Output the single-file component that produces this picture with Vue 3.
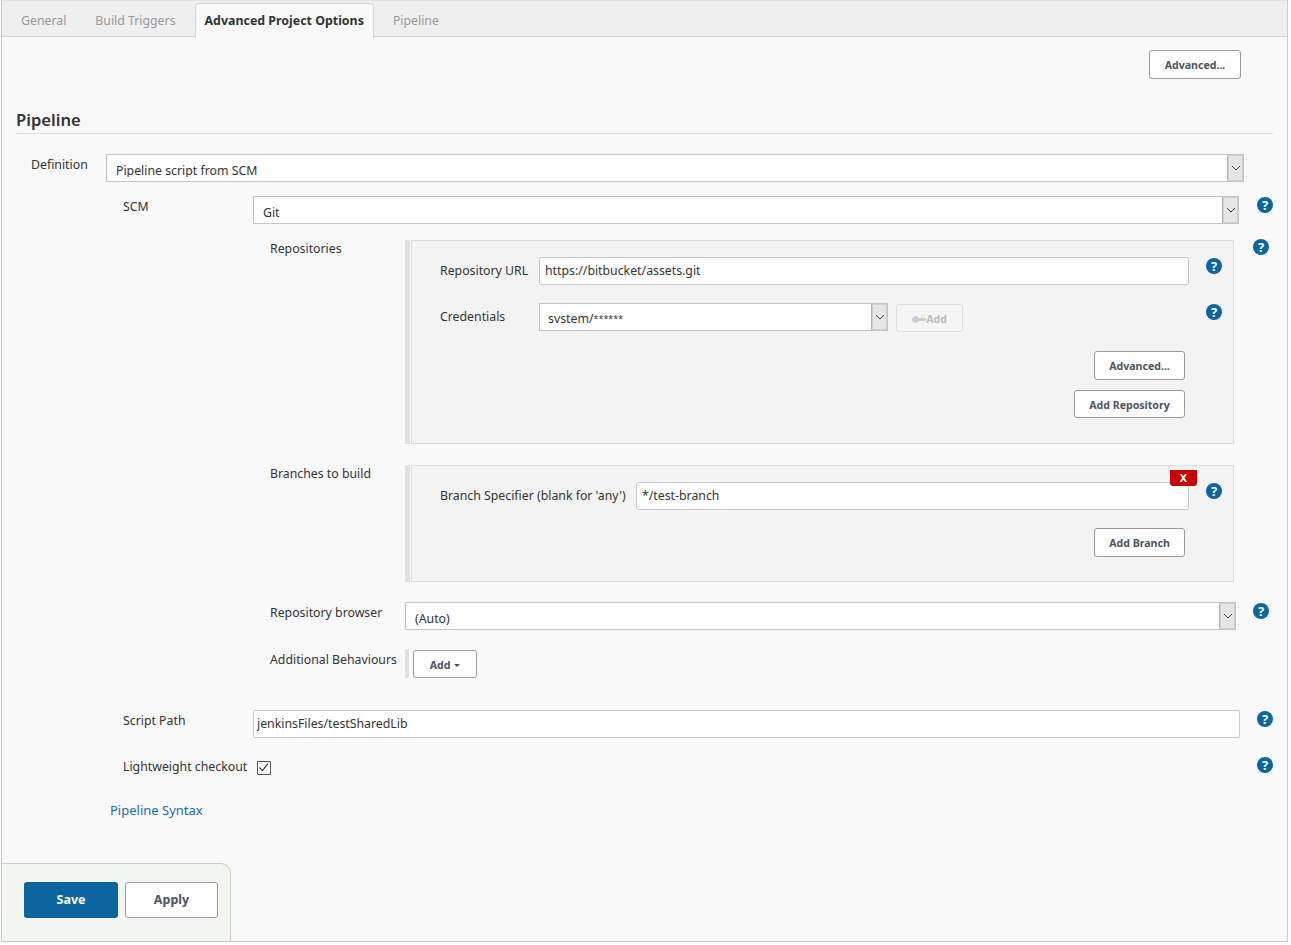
<script setup>
const tabs = [
  { label: 'General' },
  { label: 'Build Triggers' },
  { label: 'Advanced Project Options', active: true },
  { label: 'Pipeline' },
]
</script>

<template>
  <div class="page">
    <nav class="tabs">
      <a v-for="t in tabs" :key="t.label" class="tab" :class="{ active: t.active }">{{ t.label }}</a>
    </nav>

    <div class="top-action">
      <button class="btn w92">Advanced...</button>
    </div>

    <h2 class="section">Pipeline</h2>

    <div class="row def">
      <label class="lbl w75">Definition</label>
      <div class="select"><span class="val">Pipeline script from SCM</span><span class="arrow"><svg width="10" height="6" viewBox="0 0 10 6"><path d="M1 1l4 4 4-4" fill="none" stroke="#444" stroke-width="1"/></svg></span></div>
    </div>

    <div class="row scm">
      <label class="lbl w130">SCM</label>
      <div class="select"><span class="val">Git</span><span class="arrow"><svg width="10" height="6" viewBox="0 0 10 6"><path d="M1 1l4 4 4-4" fill="none" stroke="#444" stroke-width="1"/></svg></span></div>
      <span class="help ml18">?</span>
    </div>

    <div class="row git repos">
      <label class="lbl w135 lh16">Repositories</label>
      <div class="stripe"></div>
      <div class="panel h204">
        <div class="prow">
          <label class="lbl w99 pt3">Repository URL</label>
          <input class="input" value="https://bitbucket/assets.git" />
          <span class="help ml17">?</span>
        </div>
        <div class="prow mt18">
          <label class="lbl w99 pt3">Credentials</label>
          <div class="select w349"><span class="val cred">svstem/<small class="stars">******</small></span><span class="arrow"><svg width="10" height="6" viewBox="0 0 10 6"><path d="M1 1l4 4 4-4" fill="none" stroke="#444" stroke-width="1"/></svg></span></div>
          <button class="btn disabled">
            <svg class="key" width="14" height="9" viewBox="0 0 14 9"><circle cx="3.5" cy="4.5" r="3.3" fill="#c3cdd6"/><rect x="5" y="3.2" width="9" height="2.6" fill="#c3cdd6"/><rect x="9" y="0" width="4" height="3" fill="#f5ecb8"/></svg>Add
          </button>
          <span class="spacer"></span>
          <span class="help">?</span>
        </div>
        <div class="pactions">
          <button class="btn w91">Advanced...</button>
          <button class="btn w111 h28">Add Repository</button>
        </div>
      </div>
      <span class="help ml19 up">?</span>
    </div>

    <div class="row git branches">
      <label class="lbl w135 lh16">Branches to build</label>
      <div class="stripe"></div>
      <div class="panel h117">
        <button class="del">X</button>
        <div class="prow">
          <label class="lbl w196 pt3">Branch Specifier (blank for 'any')</label>
          <input class="input" value="*/test-branch" />
          <span class="help ml17">?</span>
        </div>
        <div class="pactions a2">
          <button class="btn w91">Add Branch</button>
        </div>
      </div>
      <span class="spacer35"></span>
    </div>

    <div class="row git browser">
      <label class="lbl w135">Repository browser</label>
      <div class="select"><span class="val">(Auto)</span><span class="arrow"><svg width="10" height="6" viewBox="0 0 10 6"><path d="M1 1l4 4 4-4" fill="none" stroke="#444" stroke-width="1"/></svg></span></div>
      <span class="help ml17">?</span>
    </div>

    <div class="row git behaviours">
      <label class="lbl w135">Additional Behaviours</label>
      <div class="stripe small"></div>
      <button class="btn addb">Add <i class="caret"></i></button>
    </div>

    <div class="row script">
      <label class="lbl w130">Script Path</label>
      <input class="input tight" value="jenkinsFiles/testSharedLib" />
      <span class="help ml17">?</span>
    </div>

    <div class="row light">
      <label class="lbl w134">Lightweight checkout</label>
      <span class="check"><svg width="13" height="13" viewBox="0 0 13 13"><path d="M2.5 6.5l3 3.2 5.5-7" fill="none" stroke="#333" stroke-width="1.1"/></svg></span>
      <span class="spacer"></span>
      <span class="help lift">?</span>
    </div>

    <a class="syntax">Pipeline Syntax</a>

    <div class="savebar">
      <button class="save">Save</button>
      <button class="apply">Apply</button>
    </div>
  </div>
</template>

<style>
html, body { margin: 0; background: #fff; }
</style>

<style scoped>
.page {
  position: relative;
  box-sizing: border-box;
  width: 1287px;
  height: 942px;
  margin-left: 1px;
  border: 1px solid #c9cdc9;
  border-top: 0;
  background: #f9f9f9;
  font-family: "Noto Sans", "Open Sans", sans-serif;
  font-size: 12.3px;
  color: #333;
  overflow: hidden;
}
.tabs {
  display: flex;
  box-sizing: border-box;
  height: 37px;
  padding-left: 9px;
  background: #efefef;
  border-top: 1px solid #e2e2e2;
  border-bottom: 1px solid #d4d4d4;
}
.tab {
  box-sizing: border-box;
  height: 34px;
  margin-top: 2px;
  padding: 6px 10px 0;
  margin-right: 9px;
  line-height: 23px;
  font-size: 12.3px;
  color: #999;
  white-space: nowrap;
}
.tab.active {
  height: 35px;
  margin-right: 9px;
  padding: 5px 9px 0;
  background: #f9f9f9;
  border: 1px solid #d4d4d4;
  border-bottom: 0;
  border-radius: 4px 4px 0 0;
  color: #333;
  font-size: 12.4px;
  font-weight: 700;
}
.top-action {
  display: flex;
  justify-content: flex-end;
  padding: 13px 46px 0 0;
}
.btn {
  box-sizing: border-box;
  height: 29px;
  padding: 2px 0 0;
  background: #fff;
  border: 1px solid #9a9a9a;
  border-radius: 3px;
  font: 700 10.6px/1 "Noto Sans", "Open Sans", sans-serif;
  color: #4d545d;
  white-space: nowrap;
}
.w92 { width: 92px; }
.w91 { width: 91px; }
.w111 { width: 111px; }
.h28 { height: 28px; }
.section {
  margin: 29px 14px 0;
  height: 26px;
  box-sizing: border-box;
  border-bottom: 1px solid #ddd;
  font-size: 16.6px;
  line-height: 24px;
  font-weight: 600;
  color: #333;
}
.row { display: flex; align-items: flex-start; }
.def { margin-top: 20px; padding: 0 43px 0 29px; }
.scm { margin-top: 14px; padding: 0 14px 0 121px; }
.git { padding: 0 18px 0 268px; }
.repos { margin-top: 16px; }
.branches { margin-top: 21px; }
.browser { margin-top: 20px; }
.behaviours { margin-top: 19px; }
.script { margin-top: 32px; padding: 0 14px 0 121px; }
.light { margin-top: 23px; padding: 0 14px 0 121px; }
.lbl { flex: none; padding-top: 1px; line-height: 20px; white-space: nowrap; color: #333; }
.lh16 { line-height: 16px; }
.pt3 { padding-top: 4px; }
.w75 { width: 75px; }
.w130 { width: 130px; }
.w134 { width: 134px; margin-top: -5px; }
.w135 { width: 135px; }
.w99 { width: 99px; }
.w196 { width: 196px; }
.select {
  position: relative;
  flex: 1;
  box-sizing: border-box;
  height: 28px;
  background: #fff;
  border: 1px solid #c4c4c4;
  overflow: hidden;
}
.w349 { flex: none; width: 349px; }
.val {
  position: absolute;
  left: 9px;
  top: 6px;
  height: 16px;
  line-height: 20px;
  overflow: hidden;
  white-space: nowrap;
}
.cred { left: 8px; top: 5px; }
.stars { font-size: 9px; vertical-align: 1px; }
.arrow {
  position: absolute;
  right: 0;
  top: 0;
  bottom: 0;
  width: 16px;
  display: flex;
  align-items: center;
  justify-content: center;
  box-sizing: border-box;
  background: #e6e6e6;
  border-left: 1px solid #b4b4b4;
  box-shadow: inset 0 0 0 1px #cfcfcf;
}
.help {
  flex: none;
  width: 16px;
  height: 16px;
  margin-top: 1px;
  border-radius: 50%;
  background: #0b659f;
  color: #fff;
  font: 700 13px/16px "Noto Sans", "Open Sans", sans-serif;
  text-align: center;
}
.ml17 { margin-left: 17px; }
.ml18 { margin-left: 18px; }
.ml19 { margin-left: 19px; }
.up { margin-top: -1px; }
.lift { margin-top: -4px; }
.stripe { flex: none; width: 5px; align-self: stretch; margin-right: 1px; background: #e0e0e0; }
.stripe.small { width: 4px; height: 29px; margin-right: 4px; align-self: flex-start; }
.panel {
  position: relative;
  flex: 1;
  box-sizing: border-box;
  padding: 16px 11px 0 28px;
  background: #f3f3f3;
  border: 1px solid #dcdcdc;
}
.h204 { height: 204px; }
.h117 { height: 117px; }
.prow { display: flex; align-items: flex-start; }
.mt18 { margin-top: 18px; }
.input {
  flex: 1;
  min-width: 0;
  box-sizing: border-box;
  height: 28px;
  padding: 0 5px 1px;
  background: #fff;
  border: 1px solid #c9c9c9;
  border-radius: 2px;
  font: 12.3px "Noto Sans", "Open Sans", sans-serif;
  color: #333;
  outline: 0;
}
.tight { padding: 0 3px 1px; }
.btn.disabled {
  display: flex;
  align-items: center;
  justify-content: center;
  width: 67px;
  height: 28px;
  margin: 1px 0 0 8px;
  background: #f5f5f5;
  border-color: #dedede;
  color: #bdbdbd;
}
.key { margin-right: 0; }
.spacer { flex: 1; }
.spacer35 { flex: none; width: 35px; }
.pactions {
  display: flex;
  flex-direction: column;
  align-items: flex-end;
  gap: 10px;
  margin-top: 19px;
  padding-right: 37px;
}
.a2 { margin-top: 18px; }
.del {
  position: absolute;
  right: 36px;
  top: 4px;
  z-index: 1;
  width: 27px;
  height: 16px;
  padding: 0;
  background: #c80000;
  border: 0;
  border-radius: 0 0 3px 3px;
  color: #fff;
  font: 700 11px/16px "Noto Sans", "Open Sans", sans-serif;
}
.addb { width: 64px; margin-top: 1px; height: 28px; }
.caret {
  display: inline-block;
  margin-left: 1px;
  vertical-align: 2px;
  border: 3px solid transparent;
  border-top-color: #4d545d;
  border-bottom: 0;
}
.check {
  flex: none;
  box-sizing: border-box;
  width: 14px;
  height: 14px;
  border: 1px solid #555;
  border-radius: 1px;
  background: #fff;
  display: flex;
}
.check svg { flex: none; margin: -1px 0 0 -1px; }
.syntax {
  display: block;
  margin: 23px 0 0 108px;
  line-height: 20px;
  font-size: 13px;
  color: #1a6f9e;
}
.savebar {
  position: absolute;
  left: 0;
  bottom: 0;
  box-sizing: border-box;
  display: flex;
  gap: 7px;
  width: 229px;
  height: 78px;
  padding: 18px 0 0 22px;
  background: #f3f6f0;
  border: 1px solid #c6d3c6;
  border-left: 0;
  border-bottom: 0;
  border-radius: 0 10px 0 0;
}
.save, .apply {
  box-sizing: border-box;
  height: 36px;
  padding: 1px 0 0;
  border-radius: 3px;
  font: 700 12.5px/1 "Noto Sans", "Open Sans", sans-serif;
}
.save { width: 94px; background: #0b659f; border: 0; color: #fff; }
.apply { width: 93px; background: #fff; border: 1px solid #9a9a9a; color: #4d545d; }
</style>
